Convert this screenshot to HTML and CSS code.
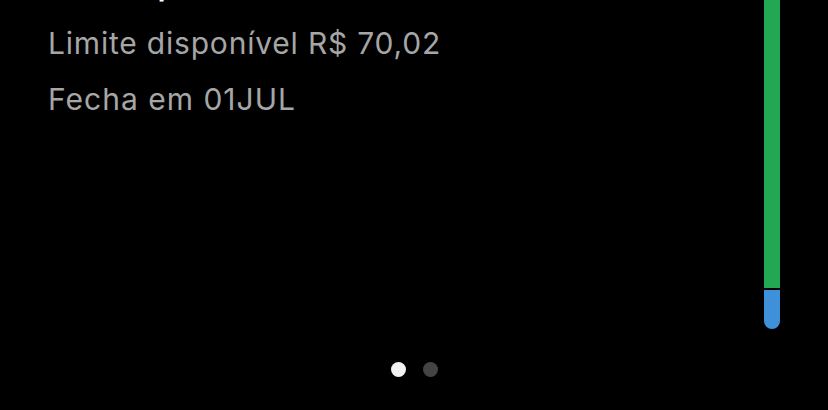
FILE: index.html
```html
<!DOCTYPE html>
<html lang="pt-BR">
<head>
  <meta charset="UTF-8" />
  <meta name="viewport" content="width=device-width, initial-scale=1.0"/>
  <title>Cartão de crédito</title>
  <link rel="stylesheet" href="styles.css">
</head>
<body>

  <div class="card">
    <div class="info">
      <h2 class="amount">R$ 79,98</h2>
      <p class="line">Limite disponível R$ 70,02</p>
      <p class="line">Fecha em 01JUL</p>
    </div>
    <div class="meter">
      <div class="meter-used"></div>
      <div class="meter-open"></div>
    </div>
  </div>

  <div class="dots">
    <span class="dot active"></span>
    <span class="dot"></span>
  </div>

</body>
</html>
```

FILE: styles.css
```css
* {
  margin: 0;
  padding: 0;
  box-sizing: border-box;
}

body {
  font-family: Inter, 'Noto Sans', sans-serif;
  background: #000;
  color: #fff;
  height: 100vh;
  overflow: hidden;
}

.card {
  display: flex;
  height: 329px;
}

.info {
  flex: 1;
  padding-left: 48px;
  overflow: hidden;
}

.amount {
  font-size: 38px;
  font-weight: 700;
  line-height: 40px;
  margin-top: -40px;
  margin-bottom: 15px;
  letter-spacing: 1px;
}

.line {
  font-size: 30px;
  line-height: 56px;
  color: #a6a6a6;
  letter-spacing: 0.8px;
}

.line + .line {
  letter-spacing: 1px;
}

.meter {
  width: 16px;
  margin-right: 48px;
  display: flex;
  flex-direction: column;
  gap: 2px;
}

.meter-used {
  height: 288px;
  background: #22a852;
}

.meter-open {
  flex: 1;
  background: #3e90d8;
  border-radius: 0 0 8px 8px;
}

.dots {
  display: flex;
  justify-content: center;
  gap: 17px;
  margin-top: 33px;
}

.dot {
  width: 15px;
  height: 15px;
  border-radius: 50%;
  background: #444;
}

.dot.active {
  background: #f2f2f2;
}
```
